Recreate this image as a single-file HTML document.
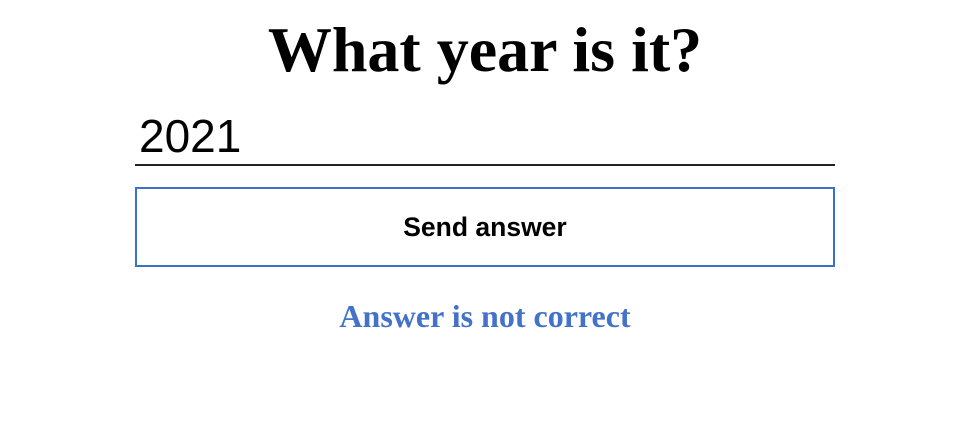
<!DOCTYPE html>
<html><head><style>
body{margin:0;width:957px;height:432px;background:#fff;position:relative;overflow:hidden}
h1{position:absolute;top:4px;left:0;width:970px;margin:0;text-align:center;font:bold 64px/92px "Liberation Serif",serif;color:#000}
.inp{position:absolute;left:135px;top:108px;width:700px;height:58px;border-bottom:2px solid #222;font:46px/56px "Liberation Sans",sans-serif;color:#000;padding-left:4px;box-sizing:border-box}
.btn{position:absolute;left:135px;top:187px;width:700px;height:80px;box-sizing:border-box;border:2px solid #3b72c9;text-align:center;font:bold 26.5px/76px "Liberation Sans",sans-serif;color:#000}
.msg{position:absolute;left:0;top:296px;width:970px;text-align:center;font:bold 32px/40px "Liberation Serif",serif;color:#4472c8}
</style></head><body>
<h1>What year is it?</h1>
<div class="inp">2021</div>
<div class="btn">Send answer</div>
<div class="msg">Answer is not correct</div>
</body></html>
